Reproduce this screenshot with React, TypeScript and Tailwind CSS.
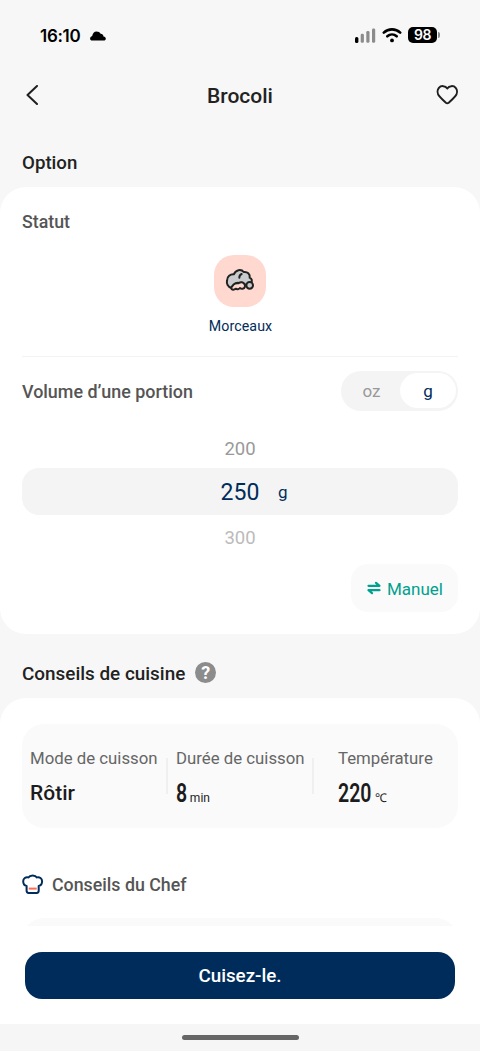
import React from 'react';

const StatusBar: React.FC = () => (
  <div className="flex h-[70px] items-center justify-between pl-10 pr-10">
    <div className="flex items-center gap-[10px] pt-[2px]">
      <span className="w-10 whitespace-nowrap font-['Inter',sans-serif] text-[17px] font-semibold leading-5 tracking-[-0.3px] text-black">16:10</span>
      <svg className="h-[10px] w-4" viewBox="0 0 16 10" fill="#000">
        <path d="M2.200 9.500C.9 9.500.1 8.800.1 7.700c0-1.200.8-2.200 2.100-2.600C2.600 2.300 4.200.5 6.500.5c1.900 0 3.300.8 4.100 2.200 1.700.1 2.700 1.100 2.900 2.700 1.500.3 2.300 1.100 2.300 2.300 0 1.100-.8 1.800-2.100 1.800z" />
      </svg>
    </div>
    <div className="flex items-center">
      <svg className="h-4 w-[22px]" viewBox="0 0 22 16">
        <rect x="0" y="10" width="3.400" height="6" rx="1.500" fill="#000" />
        <rect x="5.700" y="6.700" width="3.200" height="9" rx="1.300" fill="#8c8c8c" />
        <rect x="11.300" y="4" width="3.200" height="11.700" rx="1.300" fill="#8c8c8c" />
        <rect x="17" y="1.500" width="3.200" height="14.200" rx="1.300" fill="#8c8c8c" />
      </svg>
      <svg className="ml-[5px] h-4 w-5" viewBox="0 0 20 16" fill="none" stroke="#000" strokeWidth="2.600" strokeLinecap="round">
        <path d="M1.800 5.600C6.300 1.300 13.700 1.300 18.200 5.600" />
        <path d="M5.300 9.300C8 6.800 12 6.800 14.700 9.300" />
        <circle cx="10" cy="13.400" r="1.900" fill="#000" stroke="none" />
      </svg>
      <div className="ml-[6px] flex h-4 w-[29px] items-center justify-center rounded-[5px] bg-black font-['Inter',sans-serif] text-[14px] font-semibold leading-4 tracking-[-0.5px] text-white">
        98
      </div>
      <div className="ml-px h-[6px] w-[2px] rounded-r-sm bg-[#8c8c8c]" />
    </div>
  </div>
);

const Header: React.FC = () => (
  <header className="flex h-[50px] items-center justify-between pl-[25px] pr-[22px]">
    <svg className="h-5 w-[22px]" viewBox="0 0 22 20" fill="none" stroke="#1f1f1f" strokeWidth="2" strokeLinecap="round" strokeLinejoin="round">
      <path d="M12 1 2.500 10l9.500 9" />
    </svg>
    <h1 className="pr-[3px] pt-[2px] text-[21px] font-medium leading-6 text-[#222]">Brocoli</h1>
    <svg className="h-5 w-[22px]" viewBox="0 0 22 20" fill="none" stroke="#1f1f1f" strokeWidth="2" strokeLinejoin="round">
      <path d="M11.300 3.500C9.400.600 5 .300 2.900 2.900 1 5.200 1.300 8.800 3.300 11.200c2 2.500 4.600 4.800 6.600 6.500.9.700 1.900.7 2.800 0 2-1.700 4.600-4 6.600-6.500 2-2.400 2.300-6 .4-8.300C17.600.3 13.200.600 11.300 3.500z" />
    </svg>
  </header>
);

const PiecesIcon: React.FC = () => (
  <svg className="h-[26px] w-[30px]" viewBox="0 0 90 78" fill="none" stroke="#222" strokeWidth="6" strokeLinecap="round" strokeLinejoin="round">
    <path fill="#c9cbcc" d="M18 59C9 57 4 47 6 38 6 25 16 18 27 19 31 5 49 2 56 12c11-2 20 6 18 17 7 3 8 9 5 15L59 51C56 42 46 44 42 45 32 43 28 48 25 52z" />
    <path fill="#ffd8cf" d="M18 59c5-2 4-10 12-12 5-2 9 0 12-2 5-4 13-3 16 3 4 5 2 13-5 14-3 1-6 0-8-2-3 4-9 5-13 2-4 4-13 5-14-3z" />
    <circle cx="74" cy="52" r="10" fill="#c9cbcc" />
    <path d="M50 18c-5 2-7 5-7 11" />
  </svg>
);

const ChefHatIcon: React.FC = () => (
  <svg className="h-5 w-[22px]" viewBox="0 0 22 20" fill="none" stroke="#002c5b" strokeWidth="2" strokeLinejoin="round">
    <path d="M4.600 11.900C2.500 11.600 1.200 9.700 1.200 7.300 1.200 4.500 3.700 2.700 6.400 3.400 8 .7 13.300.7 14.900 3.400c2.700-.7 5.200 1.100 5.200 3.900 0 2.400-1.300 4.300-3.400 4.600v4.900c0 1.400-.7 2.100-2 2.100H6.600c-1.300 0-2-.7-2-2.100z" />
    <path d="M6.700 14.600h8" stroke="#ff6b50" />
  </svg>
);

interface TipProps {
  label: string;
  value: string;
  unit?: string;
  className: string;
}

const Tip: React.FC<TipProps> = ({ label, value, unit, className }) => (
  <div className={`whitespace-nowrap ${className}`}>
    <p className="text-[16.800px] leading-6 text-[#666]">{label}</p>
    {unit ? (
      <div className="mt-[7px] flex h-8 items-baseline text-[#1c1c1c]">
        <span className="inline-block origin-left scale-x-[0.75] text-[26px] font-semibold leading-8">{value}</span>
        <span className={value === '8' ? 'ml-[-1px] text-[12px]' : 'ml-[-8px] text-[12px]'}>{unit}</span>
      </div>
    ) : (
      <p className="mt-[7px] text-[21px] font-medium leading-8 text-[#1c1c1c]">{value}</p>
    )}
  </div>
);

const App: React.FC = () => {
  return (
    <div className="flex h-[1051px] w-[480px] flex-col overflow-hidden bg-[#f7f7f7] font-['Roboto',sans-serif]">
      <StatusBar />
      <Header />

      <main className="h-[806px] shrink-0 overflow-hidden">
        <h2 className="flex h-[67px] items-center px-[22px] pt-5 text-[18.700px] font-medium text-[#222]">Option</h2>

        <section className="h-[447px] rounded-[26px] bg-white px-[22px] pt-[23px]">
          <h3 className="text-[17.800px] font-medium leading-6 text-[#555]">Statut</h3>
          <div className="mt-[21px] flex flex-col items-center">
            <div className="flex size-[52px] items-center justify-center rounded-[20px] bg-[#ffd8cf]">
              <PiecesIcon />
            </div>
            <span className="mt-[9px] pl-px text-[14.200px] leading-5 tracking-[0.1px] text-[#002c5b]">Morceaux</span>
          </div>

          <div className="mt-5 flex h-[55px] items-end justify-between border-t border-[#f3f3f3]">
            <h3 className="mb-[7px] text-[17.900px] font-medium leading-6 text-[#555]">Volume d’une portion</h3>
            <div className="flex h-10 w-[117px] rounded-full bg-[#f4f4f4] p-[2px] pb-[3px] text-[17px]">
              <span className="flex flex-1 items-center justify-center pt-[3px] text-[#999]">oz</span>
              <span className="flex w-14 items-center justify-center rounded-full bg-white pt-[3px] text-[#002c5b]">g</span>
            </div>
          </div>

          <div className="mt-[26px] text-center text-[18.500px]">
            <p className="leading-6 text-[#999]">200</p>
            <div className="mt-[7px] grid h-[47px] grid-cols-[1fr_40px_1fr] items-center rounded-[17px] bg-[#f4f4f4] text-[#002c5b]">
              <span className="col-start-2 pt-[3px] text-[23px]">250</span>
              <span className="pl-[18px] pt-[2px] text-left text-[17px]">g</span>
            </div>
            <p className="mt-[11px] leading-6 text-[#bbb]">300</p>
          </div>

          <div className="mt-[14px] flex justify-end">
            <button className="flex h-12 w-[107px] items-center justify-center gap-[6px] rounded-[17px] bg-[#fafafa] pl-px text-[17px] text-[#00a08f]">
              <svg className="h-[14px] w-[14px]" viewBox="0 0 14 14" fill="none" stroke="currentColor" strokeWidth="2.200" strokeLinecap="round" strokeLinejoin="round">
                <path d="M1.500 4.800h11L9 1.800M12.500 9.200h-11L5 12.200" />
              </svg>
              <span className="pt-[3px]">Manuel</span>
            </button>
          </div>
        </section>

        <div className="flex h-16 items-center gap-[10px] px-[22px] pt-[14px]">
          <h2 className="pt-px text-[18.900px] font-medium leading-6 text-[#222]">Conseils de cuisine</h2>
          <div className="mb-[2px] flex size-[21px] items-center justify-center rounded-full bg-[#8c8c8c] text-[18px] font-bold text-white">?</div>
        </div>

        <section className="rounded-t-[26px] bg-white px-[22px] pt-[26px]">
          <div className="flex h-[104px] items-start rounded-[22px] bg-[#fafafa] pl-2 pt-[22px]">
            <Tip label="Mode de cuisson" value="Rôtir" className="w-[136px]" />
            <div className="mt-3 h-9 w-[2px] bg-[#efefef]" />
            <Tip label="Durée de cuisson" value="8" unit="min" className="w-[144px] pl-2" />
            <div className="mt-3 h-9 w-[2px] bg-[#efefef]" />
            <Tip label="Température" value="220" unit="℃" className="pl-[24px]" />
          </div>

          <div className="mt-[44px] flex h-6 items-center gap-2">
            <ChefHatIcon />
            <h3 className="pt-[2px] text-[17.800px] font-medium leading-6 text-[#555]">Conseils du Chef</h3>
          </div>
          <div className="mt-[22px] h-20 rounded-[22px] bg-[#fafafa]" />
        </section>
      </main>

      <footer className="h-[98px] shrink-0 bg-white px-[25px] pt-[26px]">
        <button className="h-[47px] w-full rounded-[17px] bg-[#002c5b] pt-[2px] text-[18.800px] font-medium text-white">Cuisez-le.</button>
      </footer>
      <div className="flex h-[27px] shrink-0 justify-center bg-[#f6f6f6] pt-[11px]">
        <div className="h-[5px] w-[117px] rounded-full bg-[#666]" />
      </div>
    </div>
  );
};

export default App;
